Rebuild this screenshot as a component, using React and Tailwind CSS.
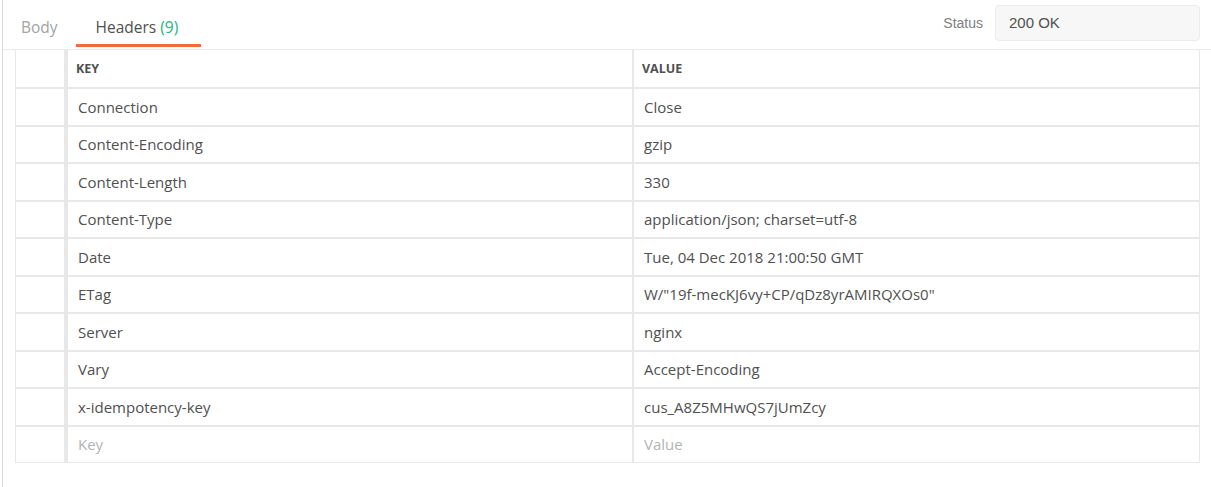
import React from "react";

const rows = [
  ["Connection", "Close"],
  ["Content-Encoding", "gzip"],
  ["Content-Length", "330"],
  ["Content-Type", "application/json; charset=utf-8"],
  ["Date", "Tue, 04 Dec 2018 21:00:50 GMT"],
  ["ETag", 'W/"19f-mecKJ6vy+CP/qDz8yrAMIRQXOs0"'],
  ["Server", "nginx"],
  ["Vary", "Accept-Encoding"],
  ["x-idempotency-key", "cus_A8Z5MHwQS7jUmZcy"],
];

export default function App() {
  return (
    <div
      className="w-[1211px] h-[487px] bg-white pl-[2px] overflow-hidden"
      style={{ fontFamily: '"Open Sans", "Liberation Sans", sans-serif' }}
    >
      <div className="h-full border-l border-[#dcdcdc] flex flex-col">
        {/* Tab bar */}
        <div className="h-[50px] border-b border-[#ebebeb] flex items-start shrink-0">
          <div className="h-[47px] px-[18px] pt-[17px] text-[15.5px] leading-[20px] text-[#a3a3a3]">
            Body
          </div>
          <div className="h-[47px] pl-[20px] pr-[23px] pt-[17px] text-[15.5px] leading-[20px] text-[#505050] border-b-[3px] border-[#f26b3a]">
            Headers <span className="text-[#26b47f]">(9)</span>
          </div>
          <div className="flex-1" />
          <div
            className="flex items-center mt-[5px] mr-[11px]"
            style={{ fontFamily: '"Liberation Sans", Arial, sans-serif' }}
          >
            <span className="text-[14px] text-[#808080] mr-[12px]">Status</span>
            <div className="w-[205px] h-[36px] rounded-[4px] border border-[#ececec] bg-[#f7f7f7] flex items-center pl-[13px] text-[15px] text-[#505050]">
              200 OK
            </div>
          </div>
        </div>

        {/* Table */}
        <div className="ml-[12px] w-[1185px] border-l border-r border-[#e8e8e8] flex flex-col text-[15px] text-[#505050]">
          <div className="h-[39px] flex border-b-2 border-[#e8e8e8] shrink-0">
            <div className="w-[52px] border-r-4 border-[#e8e8e8] shrink-0" />
            <div className="w-[566px] border-r-2 border-[#e8e8e8] flex items-center pl-[8px] pt-[2px] text-[12.5px] font-bold text-[#505050] shrink-0">
              KEY
            </div>
            <div className="flex-1 flex items-center pl-[8px] pt-[2px] text-[12.5px] font-bold text-[#505050]">
              VALUE
            </div>
          </div>
          {rows.map(([k, v]) => (
            <div key={k} className="h-[37.5px] flex border-b-2 border-[#e8e8e8] shrink-0">
              <div className="w-[52px] border-r-4 border-[#e8e8e8] shrink-0" />
              <div className="w-[566px] border-r-2 border-[#e8e8e8] flex items-center pl-[10px] shrink-0">
                {k}
              </div>
              <div className="flex-1 flex items-center pl-[10px]">{v}</div>
            </div>
          ))}
          <div className="h-[36px] flex border-b border-[#e8e8e8] shrink-0">
            <div className="w-[52px] border-r-4 border-[#e8e8e8] shrink-0" />
            <div className="w-[566px] border-r-2 border-[#e8e8e8] flex items-center pl-[10px] text-[#b3b3b3] shrink-0">
              Key
            </div>
            <div className="flex-1 flex items-center pl-[10px] text-[#b3b3b3]">Value</div>
          </div>
        </div>
      </div>
    </div>
  );
}
